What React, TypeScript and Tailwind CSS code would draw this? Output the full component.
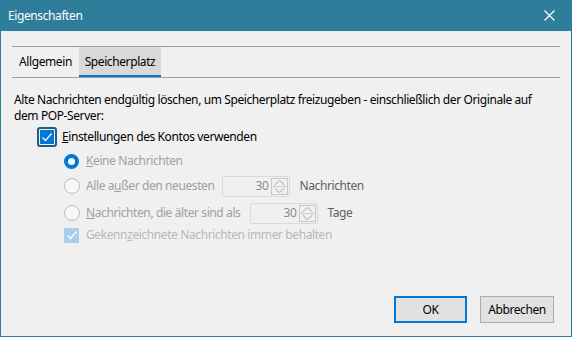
import React from 'react';

const font = { fontFamily: '"Noto Sans", "Open Sans", sans-serif' };

const Spin: React.FC<{ value: string }> = ({ value }) => (
  <div className="flex h-[21px] w-[68px] items-center justify-end rounded-[2px] border border-[#d9d9d9] bg-[#f0f0f0] pr-[1px]">
    <span className="mr-[3px] text-[#8a8a8a]">{value}</span>
    <div className="flex h-[17px] w-[17px] flex-col border border-[#c8c8c8]">
      <svg viewBox="0 0 15 7" className="h-[7px] w-[15px]">
        <path d="M2.5 6 L7.5 1.5 L12.5 6" fill="none" stroke="#a8a8a8" strokeWidth="1" />
      </svg>
      <div className="h-px bg-[#d0d0d0]" />
      <svg viewBox="0 0 15 7" className="h-[7px] w-[15px]">
        <path d="M2.5 1 L7.5 5.5 L12.5 1" fill="none" stroke="#a8a8a8" strokeWidth="1" />
      </svg>
    </div>
  </div>
);

const Radio: React.FC<{ checked?: boolean }> = ({ checked }) =>
  checked ? (
    <span className="flex h-[15px] w-[15px] items-center justify-center rounded-full bg-[#0078d7]">
      <span className="h-[7px] w-[7px] rounded-full bg-white" />
    </span>
  ) : (
    <span className="h-[16px] w-[16px] rounded-full border border-[#bcbcbc] bg-[#f7f7f7]" />
  );

const Check: React.FC = () => (
  <svg viewBox="0 0 12 12" className="h-[12px] w-[12px]">
    <path d="M1.5 6.5 L4.5 9.5 L10.5 2.5" fill="none" stroke="white" strokeWidth="1.2" />
  </svg>
);

export default function App() {
  return (
    <div className="flex h-[337px] w-[572px] flex-col border border-t-0 border-[#2e7d9a] bg-[#f0f0f0] text-[12px] tracking-[-0.4px] text-black" style={font}>
      <div className="-mx-px flex h-[31px] items-center justify-between bg-[#2e7d9a] pl-[8px] pr-[17px] text-white">
        <span>Eigenschaften</span>
        <svg viewBox="0 0 10 10" className="h-[11px] w-[11px]">
          <path d="M0.5 0.5 L9.5 9.5 M9.5 0.5 L0.5 9.5" stroke="white" strokeWidth="1.1" />
        </svg>
      </div>

      <div className="flex flex-1 flex-col px-[11px]">
        <div className="mt-[15px] flex h-[32px] border-y border-[#a0a0a0]">
          <div className="flex w-[67px] items-center justify-center">Allgemein</div>
          <div className="flex w-[82px] items-center justify-center border-b-2 border-[#0078d7] bg-[#d9d9d9] pt-[2px]">Speicherplatz</div>
        </div>

        <p className="mt-[14px] pl-[2px] leading-[16px]">
          Alte Nachrichten endgültig löschen, um Speicherplatz freizugeben - einschließlich der Originale auf
          <br />
          dem POP-Server:
        </p>

        <div className="mt-[3px] flex items-center pl-[25px]">
          <span className="flex h-[20px] w-[20px] items-center justify-center rounded-[3px] border-2 border-[#1d5f7e]">
            <span className="flex h-[14px] w-[14px] items-center justify-center bg-[#0078d7]">
              <Check />
            </span>
          </span>
          <span className="ml-[5px]"><u>E</u>instellungen des Kontos verwenden</span>
        </div>

        <div className="mt-[3px] flex flex-col pl-[52px] text-[#a0a0a0]">
          <div className="flex h-[22px] items-center gap-[7px]">
            <Radio checked />
            <span><u>K</u>eine Nachrichten</span>
          </div>
          <div className="mt-[3px] flex h-[22px] items-center">
            <Radio />
            <span className="ml-[6px]">Alle a<u>u</u>ßer den neuesten</span>
            <span className="ml-[8px]"><Spin value="30" /></span>
            <span className="ml-[9px] text-[#606060]">Nachrichten</span>
          </div>
          <div className="mt-[5px] flex h-[22px] items-center">
            <Radio />
            <span className="ml-[6px]"><u>N</u>achrichten, die älter sind als</span>
            <span className="ml-[10px]"><Spin value="30" /></span>
            <span className="ml-[9px] text-[#606060]">Tage</span>
          </div>
          <div className="flex h-[22px] items-center gap-[7px]">
            <span className="flex h-[15px] w-[15px] items-center justify-center bg-[#a9cdec]">
              <Check />
            </span>
            <span className="text-[#b8b8b8]">Gekenn<u>z</u>eichnete Nachrichten immer behalten</span>
          </div>
        </div>

        <div className="mt-auto mb-[13px] flex justify-end gap-[13px] pr-[6px]">
          <button className="h-[27px] w-[73px] border-2 border-[#0078d7] bg-[#e1e1e1]">OK</button>
          <button className="h-[27px] w-[74px] border border-[#adadad] bg-[#e1e1e1]">Abbrechen</button>
        </div>
      </div>
    </div>
  );
}
